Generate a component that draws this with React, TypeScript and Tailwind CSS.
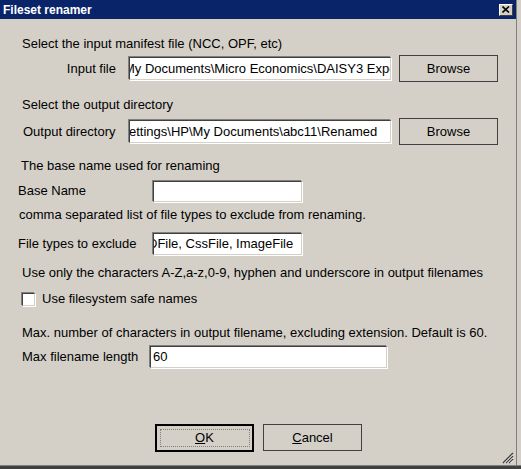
import React from "react";

const font = { fontFamily: '"Liberation Sans", Arial, sans-serif' };

function TextBox({ w, h = 23, shift = 0, children }: { w: number; h?: number; shift?: number; children?: React.ReactNode }) {
  return (
    <div
      className="bg-white border-t border-l border-[#404040] border-b border-r border-b-[#d4d0c8] border-r-[#d4d0c8] shadow-[-1px_-1px_0_#808080,1px_1px_0_#ffffff] overflow-hidden whitespace-nowrap flex items-center text-[13px] text-black"
      style={{ width: w, height: h }}
    >
      <span className="pl-[2px]" style={{ marginLeft: shift }}>
        {children}
      </span>
    </div>
  );
}

function Btn({ w, h, label, def }: { w: number; h: number; label: React.ReactNode; def?: boolean }) {
  return (
    <div
      className={`bg-[#d4d0c8] flex items-center justify-center text-[13px] text-black ${
        def ? "border-2 border-black" : "border border-[#404040]"
      }`}
      style={{ width: w, height: h }}
    >
      {def ? (
        <div className="w-[90px] h-[18px] border border-dotted border-[#808080] flex items-center justify-center">
          {label}
        </div>
      ) : (
        label
      )}
    </div>
  );
}

export default function App() {
  return (
    <div className="w-[521px] h-[469px] bg-[#d4d0c8] relative overflow-hidden text-[13px] text-black" style={font}>
      {/* title bar */}
      <div className="w-[516px] h-[19px] bg-[#0a246a] flex items-center justify-between pl-[3px] pr-[3px]">
        <span className="text-white font-bold text-[12px] leading-none">Fileset renamer</span>
        <div className="w-[14px] h-[12px] bg-[#d4d0c8] border border-t-white border-l-white border-b-[#404040] border-r-[#404040] flex items-center justify-center">
          <svg width="8" height="7" viewBox="0 0 8 7">
            <path d="M0.5 0.5 L7 6.5 M7 0.5 L0.5 6.5" stroke="#000" strokeWidth="1.6" />
          </svg>
        </div>
      </div>

      <div className="flex flex-col">
        <div className="h-[16px] mt-[17px] pl-[22px] flex items-center">Select the input manifest file (NCC, OPF, etc)</div>

        <div className="h-[27px] mt-[3px] flex items-center">
          <div className="w-[129px] pr-[13px] text-right whitespace-nowrap">Input file</div>
          <TextBox w={262} shift={-8}>My Documents\Micro Economics\DAISY3 Export</TextBox>
          <div className="ml-[8px]">
            <Btn w={99} h={27} label="Browse" />
          </div>
        </div>

        <div className="h-[16px] mt-[15px] pl-[22px] flex items-center">Select the output directory</div>

        <div className="h-[27px] mt-[5px] flex items-center">
          <div className="w-[129px] pl-[23px] whitespace-nowrap">Output directory</div>
          <TextBox w={262} shift={-3}>ettings\HP\My Documents\abc11\Renamed</TextBox>
          <div className="ml-[8px]">
            <Btn w={99} h={27} label="Browse" />
          </div>
        </div>

        <div className="h-[16px] mt-[13px] pl-[21px] flex items-center">The base name used for renaming</div>

        <div className="h-[22px] mt-[6px] flex items-center">
          <div className="w-[153px] pl-[18px] whitespace-nowrap">Base Name</div>
          <TextBox w={149} h={21} />
        </div>

        <div className="h-[16px] mt-[5px] pl-[19px] flex items-center">
          comma separated list of file types to exclude from renaming.
        </div>

        <div className="h-[22px] mt-[10px] flex items-center">
          <div className="w-[153px] pl-[18px] whitespace-nowrap">File types to exclude</div>
          <TextBox w={149} h={22} shift={-8}>DFile, CssFile, ImageFile</TextBox>
        </div>

        <div className="h-[16px] mt-[10px] pl-[22px] flex items-center">
          Use only the characters A-Z,a-z,0-9, hyphen and underscore in output filenames
        </div>

        <div className="h-[16px] mt-[10px] pl-[22px] flex items-center">
          <div className="w-[13px] h-[13px] bg-white border border-t-[#404040] border-l-[#404040] border-b-[#d4d0c8] border-r-[#d4d0c8] shadow-[-1px_-1px_0_#808080,1px_1px_0_#ffffff]" />
          <span className="ml-[7px]">Use filesystem safe names</span>
        </div>

        <div className="h-[16px] mt-[18px] pl-[22px] flex items-center">
          Max. number of characters in output filename, excluding extension. Default is 60.
        </div>

        <div className="h-[22px] mt-[5px] flex items-center">
          <div className="w-[150px] pl-[22px] whitespace-nowrap">Max filename length</div>
          <TextBox w={237} h={22}>60</TextBox>
        </div>

        <div className="mt-[56px] flex pl-[155px] gap-[9px]">
          <Btn w={99} h={28} def label={<span><span className="underline">O</span>K</span>} />
          <Btn w={99} h={27} label={<span><span className="underline">C</span>ancel</span>} />
        </div>
      </div>

      {/* window frame edges */}
      <div className="absolute top-0 left-[516px] w-[1px] h-full bg-[#808080]" />
      <div className="absolute left-0 top-[465px] w-full h-[1px] bg-[#808080]" />
      <div className="absolute left-0 top-[466px] w-full h-[3px] bg-[#404040]" />
      {/* resize grip */}
      <svg className="absolute right-[7px] bottom-[5px]" width="12" height="12" viewBox="0 0 12 12">
        <path d="M11 1 L1 11 M11 4 L4 11 M11 7 L7 11" stroke="#404040" strokeWidth="1.5" />
        <path d="M11 2.5 L2.5 11 M11 5.5 L5.5 11 M11 8.5 L8.5 11" stroke="#ffffff" strokeWidth="0.8" />
      </svg>
    </div>
  );
}
